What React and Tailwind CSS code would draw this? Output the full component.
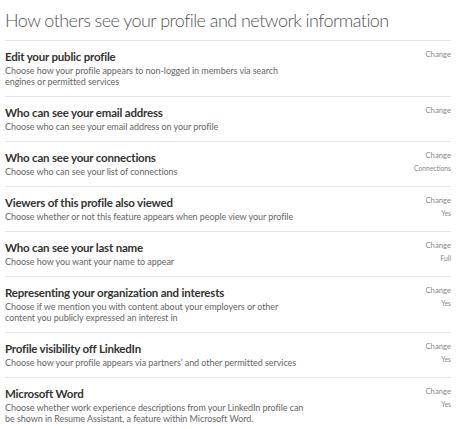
const rows = [
  {
    title: "Edit your public profile",
    desc: "Choose how your profile appears to non-logged in members via search engines or permitted services",
  },
  {
    title: "Who can see your email address",
    desc: "Choose who can see your email address on your profile",
  },
  {
    title: "Who can see your connections",
    desc: "Choose who can see your list of connections",
    value: "Connections",
  },
  {
    title: "Viewers of this profile also viewed",
    desc: "Choose whether or not this feature appears when people view your profile",
    value: "Yes",
  },
  {
    title: "Who can see your last name",
    desc: "Choose how you want your name to appear",
    value: "Full",
  },
  {
    title: "Representing your organization and interests",
    desc: "Choose if we mention you with content about your employers or other content you publicly expressed an interest in",
    value: "Yes",
  },
  {
    title: "Profile visibility off LinkedIn",
    desc: "Choose how your profile appears via partners’ and other permitted services",
    value: "Yes",
  },
  {
    title: "Microsoft Word",
    desc: "Choose whether work experience descriptions from your LinkedIn profile can be shown in Resume Assistant, a feature within Microsoft Word.",
    value: "Yes",
  },
]

function Row({ title, desc, value }) {
  return (
    <li className="flex justify-between border-t border-[#e6e6e6] pt-[8px] pb-[9px]">
      <div className="max-w-[300px]">
        <h3 className="text-[11.5px] leading-[16px] font-bold tracking-[-0.2px] text-[#333]">{title}</h3>
        <p className="text-[9px] leading-[11px] tracking-[-0.06px] text-[#666]">{desc}</p>
      </div>
      <div className="flex flex-col items-end">
        <span className="text-[7.7px] leading-[10px] text-[#888]">Change</span>
        {value && <span className="mt-[4px] text-[6.7px] leading-[9px] text-[#888]">{value}</span>}
      </div>
    </li>
  )
}

export default function App() {
  return (
    <div className="w-[467px] h-[429px] overflow-hidden bg-white pl-[5px] pr-[16px]" style={{ fontFamily: "Lato, 'Open Sans', sans-serif" }}>
      <h1 className="text-[18px] leading-[40px] font-light tracking-[-0.55px] text-[#555] whitespace-nowrap">
        How others see your profile and network information
      </h1>
      <ul>
        {rows.map((r) => (
          <Row key={r.title} {...r} />
        ))}
      </ul>
    </div>
  )
}
